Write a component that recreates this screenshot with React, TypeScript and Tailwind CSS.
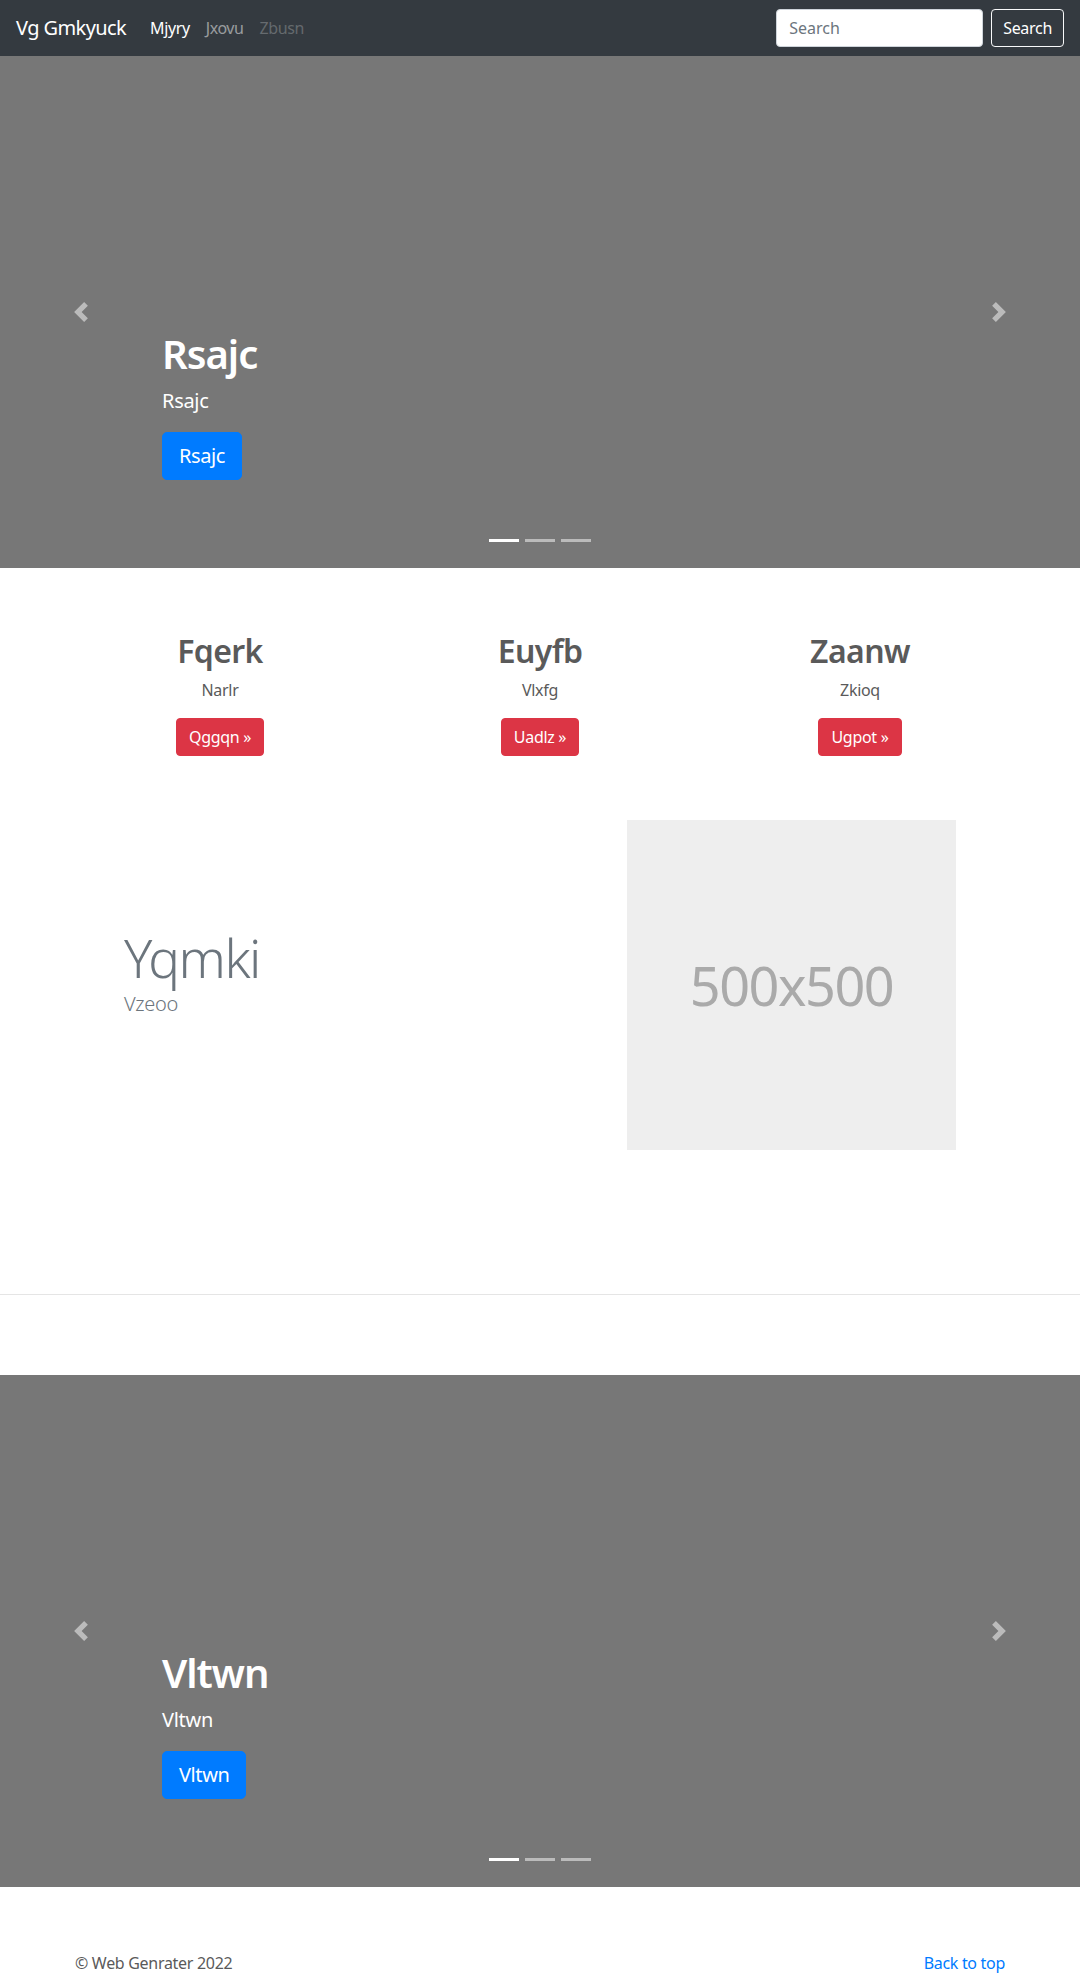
import React from "react";

const FONT = { fontFamily: '"Noto Sans", "Open Sans", Roboto, sans-serif' };

function PrevIcon() {
  return (
    <svg width="20" height="20" viewBox="0 0 8 8" fill="#fff">
      <path d="M5.25 0l-4 4 4 4 1.5-1.5L4.25 4l2.5-2.5L5.25 0z" />
    </svg>
  );
}

function NextIcon() {
  return (
    <svg width="20" height="20" viewBox="0 0 8 8" fill="#fff">
      <path d="M2.75 0l-1.5 1.5L3.75 4l-2.5 2.5L2.75 8l4-4-4-4z" />
    </svg>
  );
}

function Carousel({ title }: { title: string }) {
  return (
    <div className="relative h-[512px] bg-[#777777] overflow-hidden">
      <div className="flex h-full flex-col justify-end pl-[162px] pr-[162px] pb-[88px] text-white">
        <h1 className="mb-[8px] text-[40px] font-semibold leading-[1.2] tracking-[-1px]">{title}</h1>
        <p className="mb-[16px] text-[20px] leading-[1.5] tracking-[-0.3px]">{title}</p>
        <div>
          <a className="inline-block rounded-[5px] border border-[#007bff] bg-[#007bff] px-4 py-2 text-[20px] leading-[1.5] tracking-[-0.4px] text-white">
            {title}
          </a>
        </div>
      </div>
      <a className="absolute left-0 top-0 flex h-full w-[15%] items-center justify-center opacity-50">
        <PrevIcon />
      </a>
      <a className="absolute right-0 top-0 flex h-full w-[15%] items-center justify-center opacity-50">
        <NextIcon />
      </a>
      <ol className="absolute bottom-[26px] left-0 right-0 flex justify-center gap-[6px]">
        <li className="h-[3px] w-[30px] bg-white" />
        <li className="h-[3px] w-[30px] bg-white opacity-50" />
        <li className="h-[3px] w-[30px] bg-white opacity-50" />
      </ol>
    </div>
  );
}

function Feature({ title, text, btn }: { title: string; text: string; btn: string }) {
  return (
    <div className="flex flex-col items-center px-[15px] text-center">
      <h2 className="mb-2 text-[32px] font-semibold leading-[1.2] tracking-[-0.6px] text-[#5a5a5a]">{title}</h2>
      <p className="mb-4 text-[16px] leading-[1.5] tracking-[-0.3px] text-[#5a5a5a]">{text}</p>
      <a className="inline-block rounded-[4px] border border-[#dc3545] bg-[#dc3545] px-3 py-[6px] text-[16px] leading-[1.5] tracking-[-0.3px] text-white">
        {btn}
      </a>
    </div>
  );
}

export default function App() {
  return (
    <div className="min-h-[1975px] bg-white" style={FONT}>
      <nav className="flex h-14 items-center bg-[#343a40] px-4">
        <a className="mr-4 text-[20px] leading-[1.5] tracking-[-0.6px] text-white">Vg Gmkyuck</a>
        <ul className="flex text-[16px] leading-[1.5] tracking-[-0.4px]">
          <li className="px-2 text-white">Mjyry</li>
          <li className="px-2 text-white/50">Jxovu</li>
          <li className="px-2 text-white/25">Zbusn</li>
        </ul>
        <form className="ml-auto flex gap-2">
          <input
            className="h-[38px] w-[207px] rounded-[4px] border border-[#ced4da] bg-white px-3 text-[16px] text-[#495057] placeholder:text-[#6c757d] outline-none"
            placeholder="Search"
          />
          <button
            type="button"
            className="h-[38px] rounded-[4px] border border-[#f8f9fa] px-[11px] text-[16px] tracking-[-0.3px] text-white"
          >
            Search
          </button>
        </form>
      </nav>

      <Carousel title="Rsajc" />

      <div className="mx-auto w-[960px]">
        <div className="mt-16 grid grid-cols-3">
          <Feature title="Fqerk" text="Narlr" btn="Qggqn »" />
          <Feature title="Euyfb" text="Vlxfg" btn="Uadlz »" />
          <Feature title="Zaanw" text="Zkioq" btn="Ugpot »" />
        </div>

        <div className="mt-16 flex items-center justify-between px-16">
          <div className="text-[#6c757d]">
            <h2 className="text-[53px] font-light leading-[1.2] tracking-[-1.5px]">Yqmki</h2>
            <p className="mb-[26px] text-[20px] font-light leading-[1.5] tracking-[-0.3px]">Vzeoo</p>
          </div>
          <div className="flex h-[330px] w-[329px] items-center justify-center bg-[#eeeeee]">
            <span className="text-[54px] tracking-[-1.5px] text-[#aaaaaa]">500x500</span>
          </div>
        </div>
      </div>

      <hr className="mb-[80px] mt-[144px] border-t border-[#e5e5e5]" />

      <Carousel title="Vltwn" />

      <footer className="mx-auto flex w-[960px] justify-between px-[15px] pt-16 text-[16px] leading-[1.5] tracking-[-0.3px]">
        <p className="text-[#5a5a5a]">© Web Genrater 2022</p>
        <a className="text-[#007bff]">Back to top</a>
      </footer>
    </div>
  );
}
